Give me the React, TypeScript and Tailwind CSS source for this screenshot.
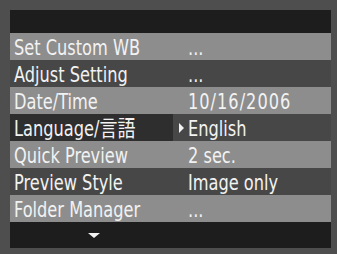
import React from 'react';

type Row = { label: string; value: string; shade: 'light' | 'dark'; selected?: boolean };

const rows: Row[] = [
  { label: 'Set Custom WB', value: '...', shade: 'light' },
  { label: 'Adjust Setting', value: '...', shade: 'dark' },
  { label: 'Date/Time', value: '10/16/2006', shade: 'light' },
  { label: 'Language/言語', value: 'English', shade: 'dark', selected: true },
  { label: 'Quick Preview', value: '2 sec.', shade: 'light' },
  { label: 'Preview Style', value: 'Image only', shade: 'dark' },
  { label: 'Folder Manager', value: '...', shade: 'light' },
];

const font = {
  fontFamily: '"DejaVu Sans Condensed", "Liberation Sans", "Noto Sans CJK JP", sans-serif',
};

// menu text is drawn a little taller than the font's own proportions
const Txt: React.FC<{ children: React.ReactNode; wide?: boolean }> = ({ children, wide }) => (
  <span className={`inline-block scale-y-[1.18] translate-y-[1px] ${wide ? 'tracking-[1px]' : ''}`}>
    {children}
  </span>
);

const App: React.FC = () => {
  return (
    <div className="w-[337px] h-[254px] bg-[#4e4e4e] pt-[10px] pl-[10px] overflow-hidden" style={font}>
      <div className="w-[321px] flex flex-col text-[18px] leading-none text-[#f2f2f2]">
        <div className="h-[23px] bg-[#1d1d1d]" />
        {rows.map((r) => (
          <div
            key={r.label}
            className={`h-[27px] flex ${r.shade === 'light' ? 'bg-[#8d8d8d]' : 'bg-[#474747]'}`}
          >
            <div
              className={`w-[163px] flex items-center pl-[4px] ${r.selected ? 'bg-[#2e2e2e]' : ''}`}
            >
              <Txt>{r.label}</Txt>
            </div>
            <div className="flex-1 flex items-center relative pl-[15px]">
              {r.selected && (
                <span className="absolute left-[6px] top-[9px] w-0 h-0 border-y-[5px] border-y-transparent border-l-[5px] border-l-[#f2f2f2]" />
              )}
              <Txt wide={/\d\//.test(r.value)}>{r.value}</Txt>
            </div>
          </div>
        ))}
        <div className="h-[26px] bg-[#1d1d1d] flex items-center">
          <span className="ml-[78px] w-0 h-0 border-x-[6px] border-x-transparent border-t-[5px] border-t-[#f2f2f2]" />
        </div>
      </div>
    </div>
  );
};

export default App;
